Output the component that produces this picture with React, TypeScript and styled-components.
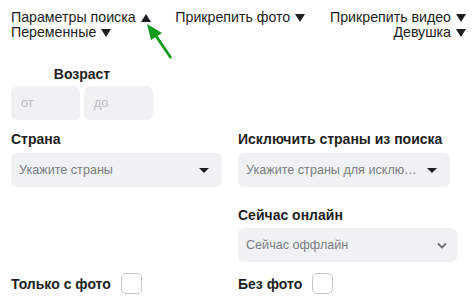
import React from 'react';
import styled, {createGlobalStyle} from 'styled-components';

const GlobalStyle = createGlobalStyle`
  body {
    margin: 0;
    background: #fff;
    font-family: "Liberation Sans", Arial, sans-serif;
    color: #1c1e21;
  }
`

const Page = styled.div`
  position: relative;
  width: 476px;
  height: 299px;
  padding: 10px 10px 0 11px;
  box-sizing: border-box;
  overflow: hidden;
`

const TopRow = styled.div`
  display: flex;
  justify-content: space-between;
  font-size: 14.2px;
  line-height: 15px;
`

const Toggle = styled.span`
  display: inline-flex;
  align-items: center;
  white-space: nowrap;
  cursor: pointer;
`

const Tri = styled.span<{$up?: boolean}>`
  width: 0;
  height: 0;
  margin-left: 5px;
  border-left: 5px solid transparent;
  border-right: 5px solid transparent;
  ${p => (p.$up ? 'border-bottom' : 'border-top')}: 8px solid #1c1e21;
`

const Grid = styled.div`
  display: grid;
  grid-template-columns: 211px 219px;
  column-gap: 16px;
  margin-top: 26px;
`

const Cell = styled.div<{$span?: boolean}>`
  display: flex;
  flex-direction: column;
  grid-column: ${p => (p.$span ? '1 / span 2' : 'auto')};
`

const Label = styled.div<{$center?: boolean; $gap: number}>`
  font-size: 14px;
  font-weight: 700;
  line-height: 16px;
  margin-bottom: ${p => p.$gap}px;
  text-align: ${p => (p.$center ? 'center' : 'left')};
`

const AgeBlock = styled.div`
  width: 142px;
  margin-bottom: 11px;
`

const AgeInputs = styled.div`
  display: flex;
  gap: 4px;
`

const Input = styled.input`
  width: 69px;
  height: 34px;
  box-sizing: border-box;
  border: none;
  border-radius: 6px;
  background: #f0f1f3;
  padding: 0 10px;
  font-family: inherit;
  font-size: 12.5px;
  color: #1c1e21;
  outline: none;
  &::placeholder {
    color: #b9bbbe;
  }
`

const Select = styled.div<{$width: number; $gap: number}>`
  width: ${p => p.$width}px;
  height: 34px;
  box-sizing: border-box;
  border-radius: 6px;
  background: #f0f1f3;
  display: flex;
  align-items: center;
  justify-content: space-between;
  padding: 0 13px 0 8px;
  font-size: 12.6px;
  color: #7a7d82;
  margin-bottom: ${p => p.$gap}px;
`

const SelectText = styled.span`
  overflow: hidden;
  white-space: nowrap;
  text-overflow: ellipsis;
`

const Caret = styled.span`
  width: 0;
  height: 0;
  border-left: 5px solid transparent;
  border-right: 5px solid transparent;
  border-top: 5px solid #1c1e21;
  margin-left: 8px;
  flex-shrink: 0;
`

const Chevron = styled.svg`
  flex-shrink: 0;
  margin-right: -3px;
`

const CheckRow = styled.label`
  display: flex;
  align-items: center;
  gap: 10px;
  font-size: 14px;
  font-weight: 700;
  line-height: 16px;
`

const Box = styled.span`
  width: 21px;
  height: 21px;
  box-sizing: border-box;
  border: 1px solid #c4c6c9;
  border-radius: 5px;
  background: #fff;
`

const Pointer = styled.svg`
  position: absolute;
  left: 140px;
  top: 20px;
`

export default function App() {
  return (
    <Page>
      <GlobalStyle/>
      <TopRow>
        <Toggle>Параметры поиска<Tri $up/></Toggle>
        <Toggle>Прикрепить фото<Tri/></Toggle>
        <Toggle>Прикрепить видео<Tri/></Toggle>
      </TopRow>
      <TopRow>
        <Toggle>Переменные<Tri/></Toggle>
        <Toggle>Девушка<Tri/></Toggle>
      </TopRow>

      <Grid>
        <Cell $span>
          <AgeBlock>
            <Label $center $gap={4}>Возраст</Label>
            <AgeInputs>
              <Input placeholder="от"/>
              <Input placeholder="до"/>
            </AgeInputs>
          </AgeBlock>
        </Cell>

        <Cell>
          <Label $gap={6}>Страна</Label>
          <Select $width={211} $gap={20}>
            <SelectText>Укажите страны</SelectText>
            <Caret/>
          </Select>
        </Cell>
        <Cell>
          <Label $gap={6}>Исключить страны из поиска</Label>
          <Select $width={212} $gap={20}>
            <SelectText>Укажите страны для исключения</SelectText>
            <Caret/>
          </Select>
        </Cell>

        <Cell/>
        <Cell>
          <Label $gap={5}>Сейчас онлайн</Label>
          <Select $width={219} $gap={11}>
            <SelectText>Сейчас оффлайн</SelectText>
            <Chevron width="10" height="7" viewBox="0 0 10 7">
              <path d="M1 1.5 L5 5.5 L9 1.5" fill="none" stroke="#6b6e73" strokeWidth="1.8"/>
            </Chevron>
          </Select>
        </Cell>

        <Cell>
          <CheckRow>Только с фото<Box/></CheckRow>
        </Cell>
        <Cell>
          <CheckRow>Без фото<Box/></CheckRow>
        </Cell>
      </Grid>

      <Pointer width="40" height="42" viewBox="0 0 40 42">
        <line x1="31" y1="38" x2="14" y2="13" stroke="#129a1a" strokeWidth="2.8"/>
        <polygon points="7,4 22,13 11,20" fill="#129a1a"/>
      </Pointer>
    </Page>
  );
}
